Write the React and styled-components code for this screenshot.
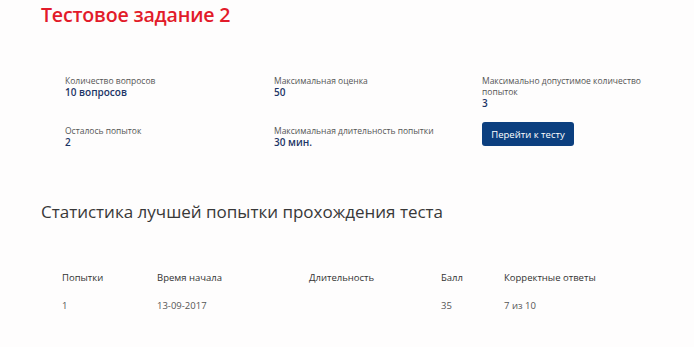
import React from "react";
import styled, { createGlobalStyle } from "styled-components";

const Global = createGlobalStyle`
  html, body { margin: 0; padding: 0; background: #fefdfd; }
  body { font-family: "Open Sans", "Noto Sans", sans-serif; }
`;

const Page = styled.div`
  width: 694px;
  height: 347px;
  box-sizing: border-box;
  padding: 2px 0 0 41px;
  overflow: hidden;
`;

const Title = styled.h1`
  margin: 0;
  font-size: 19.6px;
  line-height: 26px;
  font-weight: 600;
  color: #e21b2a;
  letter-spacing: -0.2px;
`;

const InfoGrid = styled.div`
  display: grid;
  grid-template-columns: 209px 208px 200px;
  grid-template-rows: 50px auto;
  margin: 47px 0 0 24px;
`;

const Info = styled.div`
  display: flex;
  flex-direction: column;
`;

const Label = styled.div`
  font-size: 8.5px;
  line-height: 11px;
  color: #555;
  max-width: ${(p) => (p.$narrow ? "170px" : "none")};
`;

const Value = styled.div`
  font-size: 10px;
  line-height: 12px;
  font-weight: 600;
  color: #1c3566;
`;

const Button = styled.button`
  align-self: flex-start;
  margin-top: -3px;
  width: 92px;
  height: 24px;
  border: none;
  border-radius: 3px;
  background: #0c3f7f;
  color: #fff;
  font-family: inherit;
  font-size: 9.5px;
  padding: 0;
  cursor: pointer;
`;

const Heading = styled.h2`
  margin: 53px 0 0;
  font-size: 17px;
  line-height: 22px;
  font-weight: 400;
  color: #383838;
`;

const Table = styled.div`
  margin: 49px 0 0 21px;
  display: grid;
  grid-template-columns: 95px 152px 132px 63px 140px;
  row-gap: 16px;
  font-size: 9.5px;
  line-height: 12px;
`;

const Cell = styled.div`
  color: ${(p) => (p.$head ? "#333" : "#555")};
`;

const info = [
  { label: "Количество вопросов", value: "10 вопросов" },
  { label: "Максимальная оценка", value: "50" },
  { label: "Максимально допустимое количество попыток", value: "3", narrow: true },
  { label: "Осталось попыток", value: "2" },
  { label: "Максимальная длительность попытки", value: "30 мин." },
];

const head = ["Попытки", "Время начала", "Длительность", "Балл", "Корректные ответы"];
const row = ["1", "13-09-2017", "", "35", "7 из 10"];

export default function App() {
  return (
    <Page>
      <Global />
      <Title>Тестовое задание 2</Title>
      <InfoGrid>
        {info.map((i) => (
          <Info key={i.label}>
            <Label $narrow={i.narrow}>{i.label}</Label>
            <Value>{i.value}</Value>
          </Info>
        ))}
        <Info>
          <Button>Перейти к тесту</Button>
        </Info>
      </InfoGrid>
      <Heading>Статистика лучшей попытки прохождения теста</Heading>
      <Table>
        {head.map((h) => (
          <Cell key={h} $head>{h}</Cell>
        ))}
        {row.map((c, i) => (
          <Cell key={i}>{c}</Cell>
        ))}
      </Table>
    </Page>
  );
}
